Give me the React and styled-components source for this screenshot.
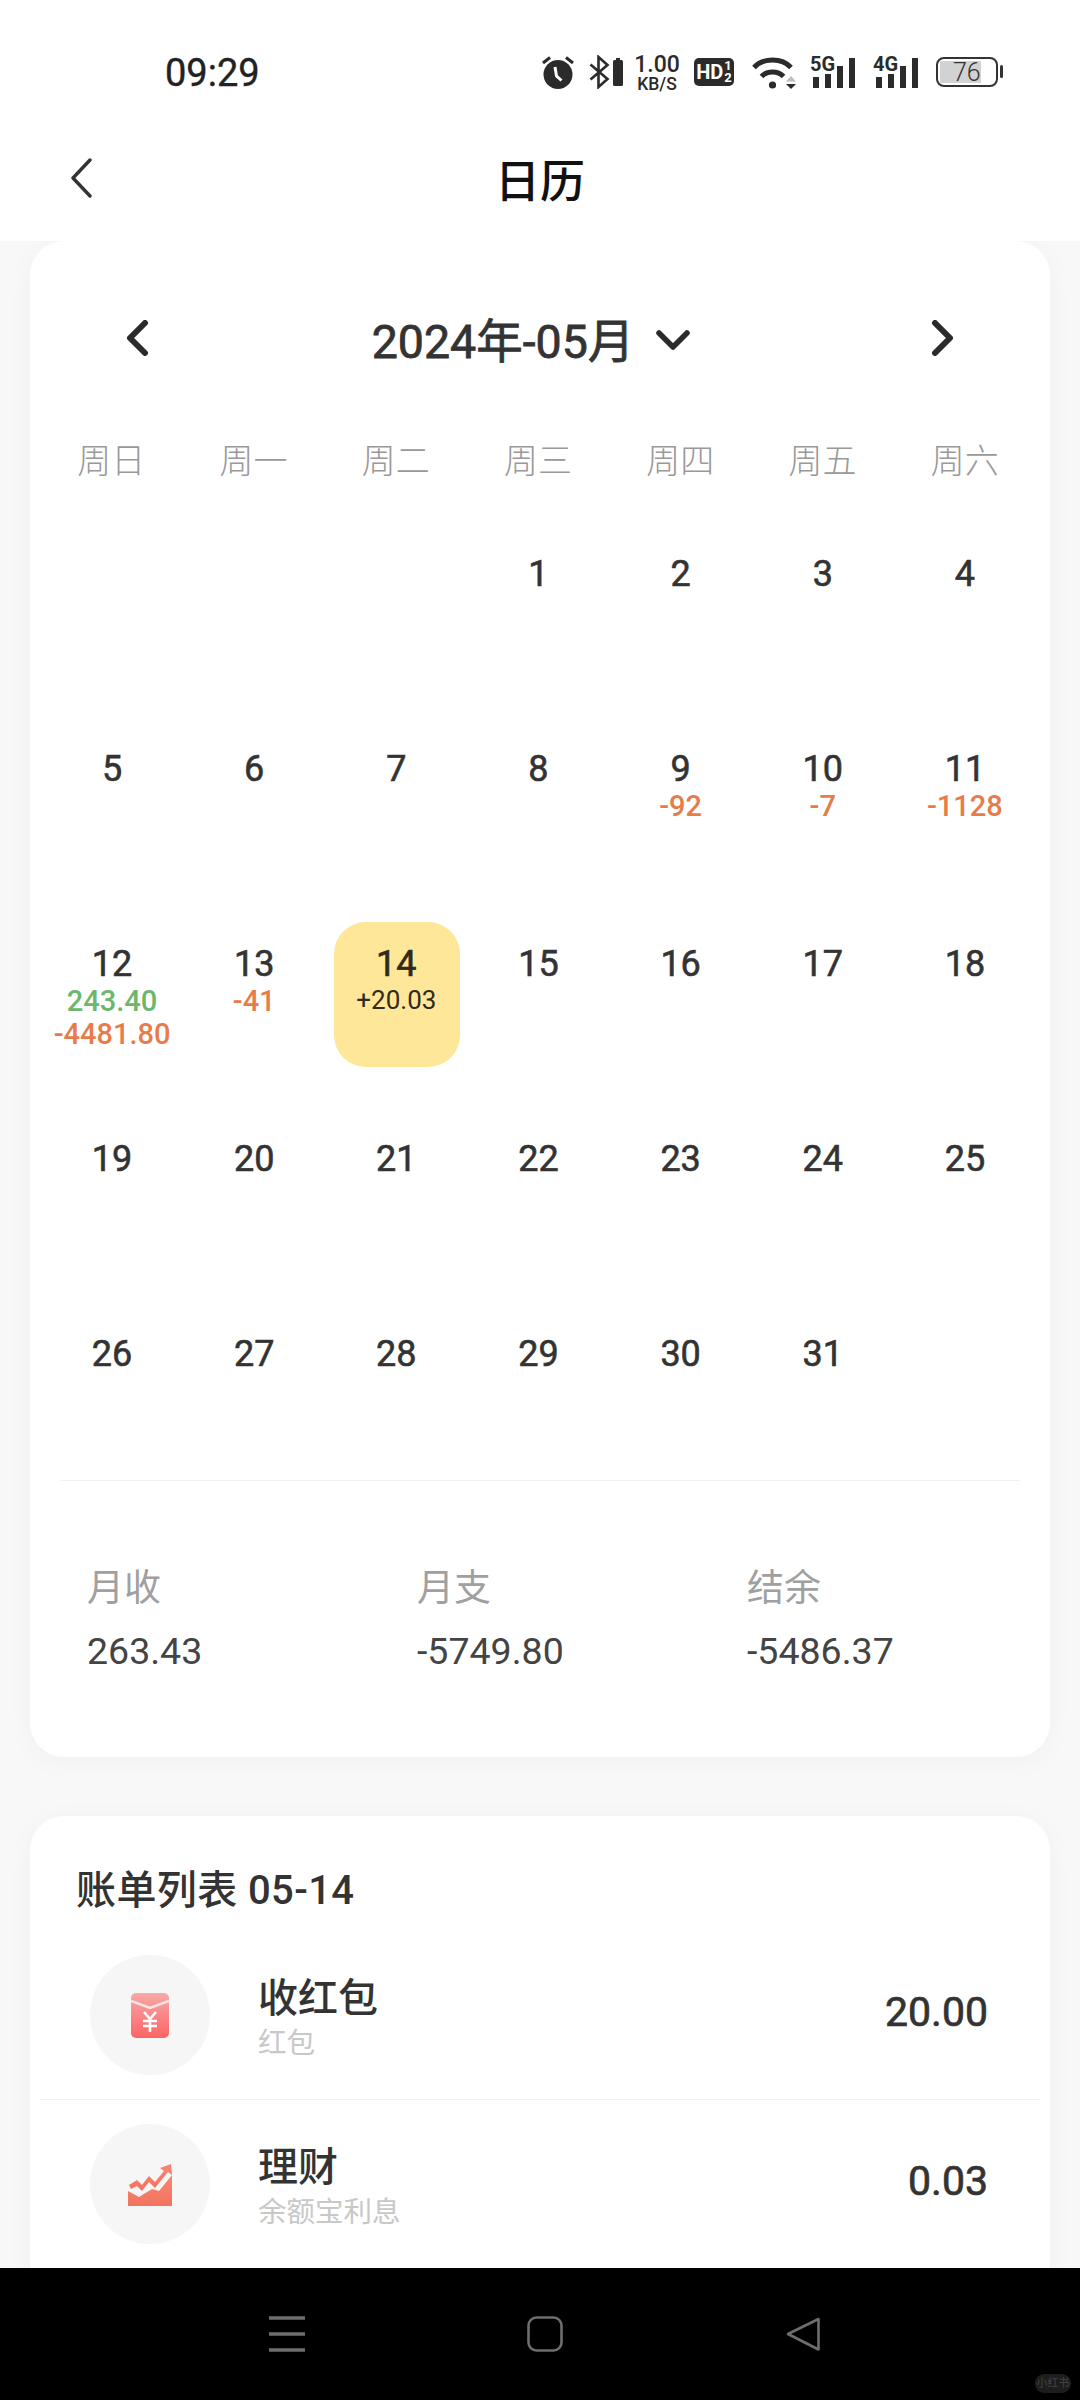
import React from "react";
import styled, { createGlobalStyle } from "styled-components";

const GlobalStyle = createGlobalStyle`
  html, body {
    margin: 0;
    padding: 0;
    background: #f8f8f8;
    font-family: Roboto, "Noto Sans CJK SC", sans-serif;
  }
  * {
    box-sizing: border-box;
  }
`;

const Page = styled.div`
  width: 1080px;
  height: 2400px;
  display: flex;
  flex-direction: column;
  overflow: hidden;
  background: #f8f8f8;
  color: #333;
`;

const Header = styled.header`
  position: relative;
  z-index: 1;
  height: 241px;
  flex: none;
  background: #fff;
`;

const StatusBar = styled.div`
  height: 122px;
  padding: 22px 82px 0 165px;
  display: flex;
  align-items: center;
  justify-content: space-between;
  color: #2b2b2b;
`;

const Time = styled.div`
  margin-top: 2px;
  font-size: 38px;
  font-weight: 400;
  -webkit-text-stroke: 0.4px #222;
  color: #222;
`;

const StatusIcons = styled.div`
  display: flex;
  align-items: center;
`;

const StatusItem = styled.div`
  position: relative;
  flex: none;
  margin-left: ${(props) => props.$ml || 0}px;
  svg {
    display: block;
  }
`;

const Speed = styled.div`
  width: 46px;
  margin-top: 4px;
  display: flex;
  flex-direction: column;
  align-items: center;
  font-weight: 500;
  white-space: nowrap;
`;

const SpeedValue = styled.span`
  font-size: 23px;
  line-height: 20px;
`;

const SpeedUnit = styled.span`
  font-size: 17.5px;
  line-height: 19px;
`;

const HdBadge = styled.div`
  width: 40px;
  height: 28px;
  border-radius: 5px;
  background: #2b2b2b;
  color: #fff;
  display: flex;
  align-items: center;
  justify-content: center;
  font-family: "Liberation Sans Narrow", Roboto, sans-serif;
  font-weight: 700;
  font-size: 20px;
`;

const HdSim = styled.span`
  margin-left: 1px;
  display: flex;
  flex-direction: column;
  font-size: 13px;
  line-height: 12px;
`;

const Signal = styled.div`
  width: 46px;
  height: 34px;
`;

const SignalLabel = styled.span`
  position: absolute;
  left: 0;
  top: -1px;
  font-family: "Liberation Sans Narrow", Roboto, sans-serif;
  font-size: 20px;
  line-height: 20px;
  font-weight: 700;
`;

const Battery = styled.div`
  position: relative;
  width: 62px;
  height: 30px;
  border: 2.5px solid #333;
  border-radius: 8px;
  padding-left: 15px;
  display: flex;
  align-items: center;
  font-size: 25px;
  font-weight: 300;
  color: #333;
  &::before {
    content: "";
    position: absolute;
    left: 2px;
    top: 2px;
    bottom: 2px;
    width: 41px;
    background: #d2d2d2;
  }
  &::after {
    content: "";
    position: absolute;
    right: -7px;
    top: 6px;
    width: 3px;
    height: 13px;
    border-radius: 2px;
    background: #333;
  }
`;

const BatteryText = styled.span`
  position: relative;
`;

const TitleBar = styled.div`
  height: 119px;
  padding-bottom: 7px;
  display: grid;
  grid-template-columns: 1fr auto 1fr;
  align-items: center;
`;

const BackButton = styled.div`
  padding-left: 70px;
  svg {
    display: block;
  }
`;

const Title = styled.h1`
  margin: 0;
  font-size: 45px;
  font-weight: 500;
  color: #111;
`;

const Content = styled.main`
  flex: 1;
  min-height: 0;
  padding: 0 30px;
  overflow: hidden;
`;

const Card = styled.section`
  background: #fff;
  border-radius: 34px;
  box-shadow: 0 4px 28px rgba(0, 0, 0, 0.035);
`;

const CalendarCard = styled(Card)`
  height: 1516px;
  padding-top: 47px;
`;

const MonthRow = styled.div`
  height: 100px;
  padding: 0 96px;
  display: flex;
  align-items: center;
  justify-content: space-between;
  svg {
    display: block;
  }
`;

const MonthPicker = styled.div`
  display: flex;
  align-items: center;
  gap: 22px;
  padding-right: 18px;
  padding-bottom: 2px;
  font-size: 46.5px;
  font-weight: 400;
  -webkit-text-stroke: 0.8px #333;
  color: #333;
  svg {
    margin-top: 5px;
  }
`;

const WeekRow = styled.div`
  margin: 40px 14px 0 10px;
  height: 60px;
  display: grid;
  grid-template-columns: repeat(7, 1fr);
  align-items: center;
  justify-items: center;
`;

const WeekDay = styled.span`
  font-size: 34px;
  font-weight: 300;
  color: #999;
`;

const DayGrid = styled.div`
  margin: 44px 13px 0 12px;
  display: grid;
  grid-template-columns: repeat(7, 1fr);
  grid-auto-rows: 145px;
  row-gap: 50px;
  justify-items: center;
`;

const DayCell = styled.div`
  width: 126px;
  padding: 22px 2px 0 0;
  border-radius: 32px;
  display: flex;
  flex-direction: column;
  align-items: center;
  white-space: nowrap;
  background: ${(props) => (props.$active ? "#fee798" : "transparent")};
  color: ${(props) => (props.$active ? "#2f2a1a" : "#333")};
`;

const DayNumber = styled.div`
  font-size: 36px;
  line-height: 40px;
  font-weight: 400;
  -webkit-text-stroke: 0.6px currentColor;
`;

const DayAmount = styled.div`
  font-size: ${(props) => (props.$dark ? 26 : 29)}px;
  font-weight: ${(props) => (props.$dark ? 400 : 500)};
  line-height: 33px;
  position: relative;
  top: ${(props) => (props.$dark ? 0 : 1)}px;
  color: ${(props) => props.$color};
`;

const Divider = styled.div`
  margin: 23px 30px 0 31px;
  height: 1px;
  background: #f0f0f0;
`;

const Summary = styled.div`
  padding: 83px 0 0 57px;
  display: grid;
  grid-template-columns: repeat(3, 330px);
`;

const SummaryLabel = styled.div`
  font-size: 37px;
  line-height: 50px;
  color: #a0a0a0;
`;

const SummaryValue = styled.div`
  margin-top: 12px;
  font-size: 37.5px;
  line-height: 50px;
  color: #444;
`;

const BillCard = styled(Card)`
  margin-top: 59px;
  padding: 50px 10px 0;
  height: 600px;
`;

const BillHeading = styled.h2`
  margin: 0 0 15px 36px;
  font-size: 40px;
  line-height: 50px;
  font-weight: 500;
  letter-spacing: 0.4px;
  color: #333;
`;

const BillRow = styled.div`
  height: 169px;
  padding: 0 52px 0 50px;
  display: flex;
  align-items: center;
  border-bottom: 1px solid #f1f1f1;
`;

const IconCircle = styled.div`
  width: 120px;
  height: 120px;
  flex: none;
  border-radius: 50%;
  background: #f6f6f6;
  display: flex;
  align-items: center;
  justify-content: center;
`;

const BillText = styled.div`
  margin-left: 48px;
  flex: 1;
  padding-top: 9px;
`;

const BillName = styled.div`
  font-size: 40px;
  line-height: 47px;
  font-weight: 500;
  color: #333;
`;

const BillNote = styled.div`
  font-size: 28.5px;
  line-height: 43px;
  color: #c8c8c8;
`;

const BillAmount = styled.div`
  font-size: 41px;
  font-weight: 400;
  -webkit-text-stroke: 0.7px #333;
  color: #333;
  margin-bottom: 6px;
`;

const NavBar = styled.nav`
  position: relative;
  z-index: 1;
  height: 132px;
  flex: none;
  padding-left: 269px;
  background: #000;
  display: flex;
  align-items: center;
  gap: 222px;
  svg {
    display: block;
  }
`;

const Watermark = styled.span`
  position: absolute;
  left: 1035px;
  top: 106px;
  width: 36px;
  height: 19px;
  border-radius: 9px;
  background: #1d1d1d;
  color: #444;
  font-size: 11px;
  line-height: 19px;
  text-align: center;
  white-space: nowrap;
`;

const AlarmIcon = () => (
  <svg width="32" height="34" viewBox="0 0 32 34">
    <circle cx="16" cy="19.5" r="14.5" fill="#2b2b2b" />
    <path d="M1 8 8 2.500M31 8 24 2.500" stroke="#2b2b2b" strokeWidth="3" />
    <path d="M13 12l1.500 9 5 4.500" stroke="#fff" strokeWidth="3" fill="none" />
  </svg>
);

const BluetoothIcon = () => (
  <svg width="21" height="34" viewBox="0 0 21 34">
    <path d="M1.500 9.500 18.500 24 9.500 32V2l9 8L1.500 24.500" fill="none" stroke="#2b2b2b" strokeWidth="2.600" />
  </svg>
);

const MiniBattery = () => (
  <svg width="10" height="28" viewBox="0 0 10 28">
    <rect x="3" width="4" height="3" fill="#2b2b2b" />
    <rect y="2" width="10" height="26" rx="1.500" fill="#2b2b2b" />
  </svg>
);

const WifiIcon = () => (
  <svg width="44" height="34" viewBox="0 0 44 34">
    <g fill="none" stroke="#2b2b2b" strokeWidth="5">
      <path d="M2 12.500C11 2.500 30 2.500 39 12.500" />
      <path d="M9.500 21.500C15 15.500 26 15.500 31.500 21.500" />
    </g>
    <circle cx="20.500" cy="30" r="3.600" fill="#2b2b2b" />
    <path d="M34 26.500 39 21l5 5.500z" fill="#bdbdbd" />
    <path d="M34 29h10l-5 5z" fill="#2b2b2b" />
  </svg>
);

const SignalBars = () => (
  <svg width="46" height="34" viewBox="0 0 46 34">
    <rect x="3" y="22" width="6" height="11" fill="#2b2b2b" />
    <rect x="15" y="19" width="6" height="14" fill="#2b2b2b" />
    <rect x="27" y="11" width="6" height="22" fill="#2b2b2b" />
    <rect x="39" y="3" width="6" height="30" fill="#2b2b2b" />
  </svg>
);

const Chevron = ({ d, width, height, strokeWidth, color }) => (
  <svg width={width} height={height} viewBox={`0 0 ${width} ${height}`}>
    <path d={d} fill="none" stroke={color} strokeWidth={strokeWidth} strokeLinecap="round" strokeLinejoin="round" />
  </svg>
);

const RedPacketIcon = () => (
  <svg width="38" height="45" viewBox="0 0 38 45">
    <defs>
      <linearGradient id="packet" x1="0" y1="0" x2="0" y2="1">
        <stop offset="0" stopColor="#f9a8a8" />
        <stop offset="1" stopColor="#fb6465" />
      </linearGradient>
    </defs>
    <rect width="38" height="45" rx="5" fill="url(#packet)" />
    <path d="M0 8 19 15 38 8" fill="none" stroke="#fde6e6" strokeWidth="2.400" />
    <path d="M13 19 19 26 25 19M19 26V39M12 28H26M12 33H26" fill="none" stroke="#fff" strokeWidth="2.600" />
  </svg>
);

const WealthIcon = () => (
  <svg width="44" height="43" viewBox="0 0 44 43">
    <defs>
      <linearGradient id="wealth" x1="0" y1="0" x2="0" y2="1">
        <stop offset="0" stopColor="#f98572" />
        <stop offset="1" stopColor="#f2745f" />
      </linearGradient>
    </defs>
    <path d="M0 28 11 34 24 26 31 28 44 12V43H0z" fill="url(#wealth)" />
    <path
      d="M1 22 9 17 14 22 21 13 27 19 36 8 32 5 43 1 44 12 40 9 27 25 21 19 14 28 9 23 3 26z"
      fill="url(#wealth)"
    />
  </svg>
);

const weekDays = ["周日", "周一", "周二", "周三", "周四", "周五", "周六"];

const green = "#6cb76b";
const orange = "#e77c4a";

const dayAmounts = {
  9: [["-92", orange]],
  10: [["-7", orange]],
  11: [["-1128", orange]],
  12: [
    ["243.40", green],
    ["-4481.80", orange],
  ],
  13: [["-41", orange]],
  14: [["+20.03", "#2f2a1a"]],
};

const days = [null, null, null, ...Array.from({ length: 31 }, (_, i) => i + 1)];

const summary = [
  ["月收", "263.43"],
  ["月支", "-5749.80"],
  ["结余", "-5486.37"],
];

export default function App() {
  return (
    <Page>
      <GlobalStyle />
      <Header>
        <StatusBar>
          <Time>09:29</Time>
          <StatusIcons>
            <StatusItem>
              <AlarmIcon />
            </StatusItem>
            <StatusItem $ml={15}>
              <BluetoothIcon />
            </StatusItem>
            <StatusItem $ml={3}>
              <MiniBattery />
            </StatusItem>
            <StatusItem $ml={11}>
              <Speed>
                <SpeedValue>1.00</SpeedValue>
                <SpeedUnit>KB/S</SpeedUnit>
              </Speed>
            </StatusItem>
            <StatusItem $ml={14}>
              <HdBadge>
                HD
                <HdSim>
                  <span>1</span>
                  <span>2</span>
                </HdSim>
              </HdBadge>
            </StatusItem>
            <StatusItem $ml={18}>
              <WifiIcon />
            </StatusItem>
            <StatusItem $ml={14}>
              <Signal>
                <SignalBars />
                <SignalLabel>5G</SignalLabel>
              </Signal>
            </StatusItem>
            <StatusItem $ml={17}>
              <Signal>
                <SignalBars />
                <SignalLabel>4G</SignalLabel>
              </Signal>
            </StatusItem>
            <StatusItem $ml={17}>
              <Battery>
                <BatteryText>76</BatteryText>
              </Battery>
            </StatusItem>
          </StatusIcons>
        </StatusBar>
        <TitleBar>
          <BackButton>
            <Chevron d="M20 2 3 20l17 18" width={23} height={40} strokeWidth={3.4} color="#333" />
          </BackButton>
          <Title>日历</Title>
        </TitleBar>
      </Header>

      <Content>
        <CalendarCard>
          <MonthRow>
            <Chevron d="M19 3 4 18l15 15" width={23} height={36} strokeWidth={6} color="#2b2b2b" />
            <MonthPicker>
              2024年-05月
              <Chevron d="M3 3 17 17 31 3" width={34} height={20} strokeWidth={5.5} color="#2b2b2b" />
            </MonthPicker>
            <Chevron d="M4 3 19 18 4 33" width={23} height={36} strokeWidth={6} color="#2b2b2b" />
          </MonthRow>

          <WeekRow>
            {weekDays.map((day) => (
              <WeekDay key={day}>{day}</WeekDay>
            ))}
          </WeekRow>

          <DayGrid>
            {days.map((day, i) => (
              <DayCell key={i} $active={day === 14}>
                {day && <DayNumber>{day}</DayNumber>}
                {(dayAmounts[day] || []).map(([text, color]) => (
                  <DayAmount key={text} $color={color} $dark={day === 14}>
                    {text}
                  </DayAmount>
                ))}
              </DayCell>
            ))}
          </DayGrid>

          <Divider />

          <Summary>
            {summary.map(([label, value]) => (
              <div key={label}>
                <SummaryLabel>{label}</SummaryLabel>
                <SummaryValue>{value}</SummaryValue>
              </div>
            ))}
          </Summary>
        </CalendarCard>

        <BillCard>
          <BillHeading>账单列表 05-14</BillHeading>
          <BillRow>
            <IconCircle>
              <RedPacketIcon />
            </IconCircle>
            <BillText>
              <BillName>收红包</BillName>
              <BillNote>红包</BillNote>
            </BillText>
            <BillAmount>20.00</BillAmount>
          </BillRow>
          <BillRow>
            <IconCircle>
              <WealthIcon />
            </IconCircle>
            <BillText>
              <BillName>理财</BillName>
              <BillNote>余额宝利息</BillNote>
            </BillText>
            <BillAmount>0.03</BillAmount>
          </BillRow>
        </BillCard>
      </Content>

      <NavBar>
        <svg width="36" height="36" viewBox="0 0 36 36">
          <path d="M0 2H36M0 18H36M0 34H36" stroke="#6e6e6e" strokeWidth="3.400" />
        </svg>
        <svg width="36" height="36" viewBox="0 0 36 36">
          <rect x="1.500" y="1.500" width="33" height="33" rx="8" fill="none" stroke="#6e6e6e" strokeWidth="2.600" />
        </svg>
        <svg width="36" height="36" viewBox="0 0 36 36">
          <path d="M33.500 3 3 18l30.500 15.500z" fill="none" stroke="#6e6e6e" strokeWidth="2.600" strokeLinejoin="round" />
        </svg>
        <Watermark>小红书</Watermark>
      </NavBar>
    </Page>
  );
}
